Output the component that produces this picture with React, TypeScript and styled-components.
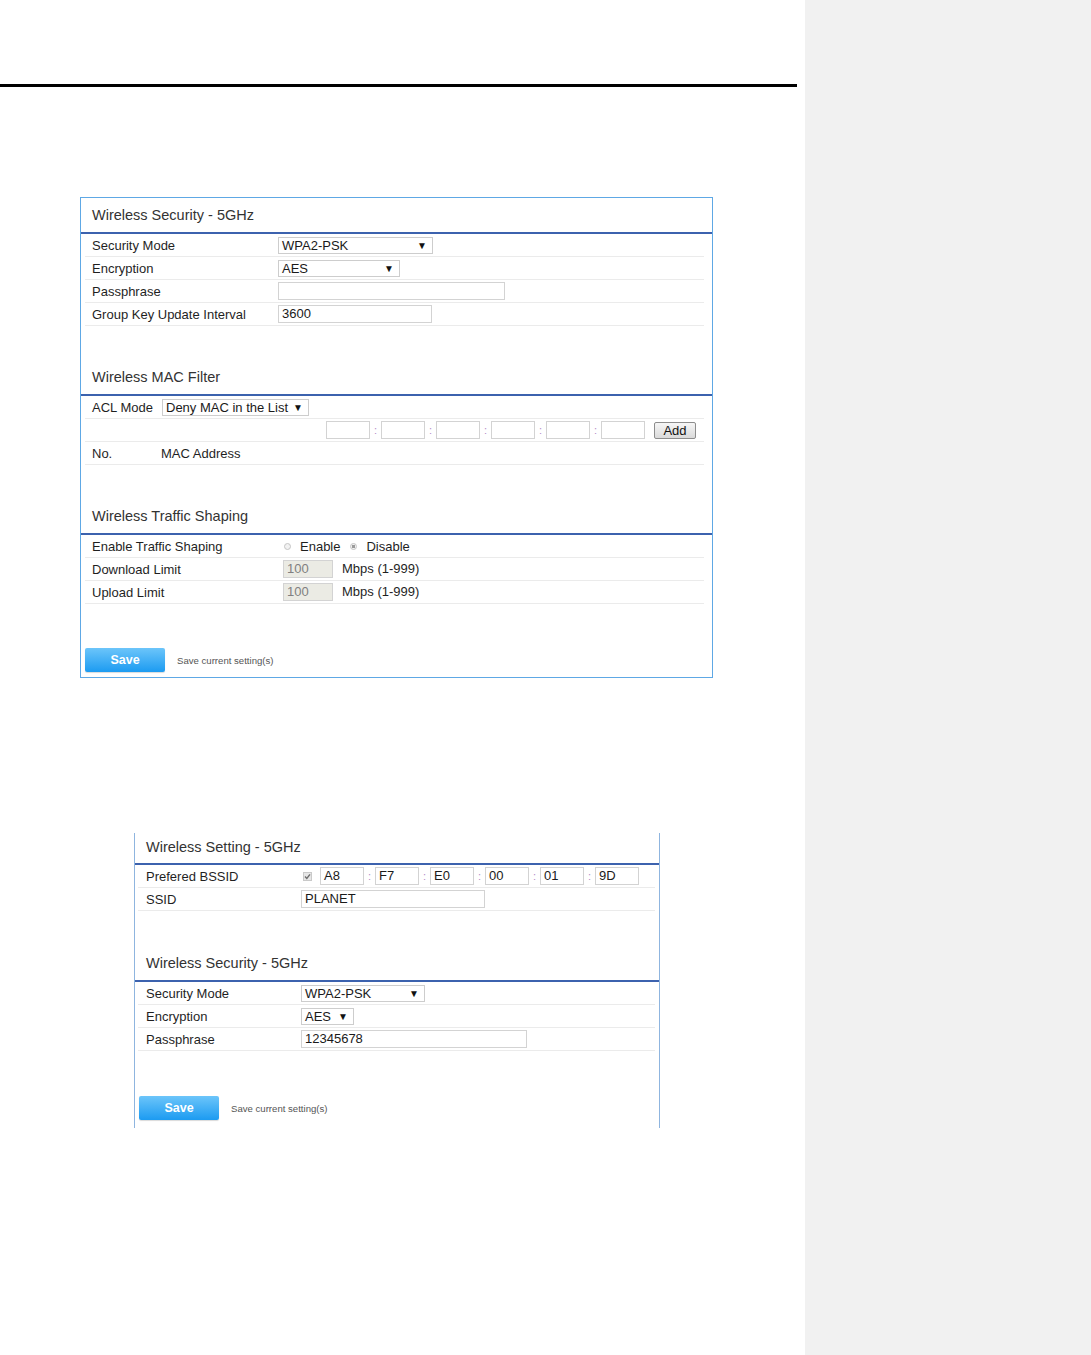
import React from "react";
import styled, { createGlobalStyle } from "styled-components";

const Global = createGlobalStyle`
  html, body { margin: 0; padding: 0; background: #fff; }
  body { font-family: "Liberation Sans", Arial, sans-serif; color: #222; }
  * { box-sizing: border-box; }
`;

const Page = styled.div`
  display: flex;
  min-height: 1355px;
`;

const Main = styled.div`
  width: 805px;
  flex-shrink: 0;
  background: #fff;
  padding-top: 84px;
`;

const Side = styled.div`
  flex: 1;
  background: #f1f1f1;
`;

const Rule = styled.div`
  width: 797px;
  height: 3px;
  background: #000;
`;

const Panel = styled.div<{ $top: number; $left: number; $width: number; $height: number; $open?: boolean }>`
  margin-top: ${(p) => p.$top}px;
  margin-left: ${(p) => p.$left}px;
  width: ${(p) => p.$width}px;
  height: ${(p) => p.$height}px;
  border: 1px solid ${(p) => (p.$open ? "#8fb5df" : "#5ea8e5")};
  ${(p) => (p.$open ? "border-top: none; border-bottom: none;" : "")}
  display: flex;
  flex-direction: column;
`;

const SectionTitle = styled.div<{ $pt: number; $pb: number; $pl: number; $mt?: number }>`
  margin-top: ${(p) => p.$mt ?? 0}px;
  padding: ${(p) => p.$pt}px 0 ${(p) => p.$pb}px ${(p) => p.$pl}px;
  font-size: 14.5px;
  line-height: 18px;
  color: #333;
  border-bottom: 2px solid #3c62ae;
`;

const Rows = styled.div<{ $ml: number; $mr: number }>`
  margin: 0 ${(p) => p.$mr}px 0 ${(p) => p.$ml}px;
  display: flex;
  flex-direction: column;
`;

const Row = styled.div<{ $pl?: number }>`
  display: flex;
  align-items: center;
  height: 23px;
  border-bottom: 1px solid #ebebeb;
  padding-left: ${(p) => p.$pl ?? 0}px;
  font-size: 13px;
  color: #1f1f1f;
`;

const Label = styled.div<{ $w: number; $pl: number }>`
  width: ${(p) => p.$w}px;
  padding-left: ${(p) => p.$pl}px;
  flex-shrink: 0;
  font-size: 13px;
  color: #1f1f1f;
  white-space: nowrap;
`;

const TextBox = styled.div<{ $w: number; $h?: number; $disabled?: boolean; $ml?: number }>`
  width: ${(p) => p.$w}px;
  height: ${(p) => p.$h ?? 18}px;
  margin-left: ${(p) => p.$ml ?? 0}px;
  border: 1px solid #d3d3d3;
  background: ${(p) => (p.$disabled ? "#ebebe4" : "#fff")};
  color: ${(p) => (p.$disabled ? "#808080" : "#1a1a1a")};
  font-size: 13px;
  line-height: 16px;
  padding-left: 3px;
  flex-shrink: 0;
  white-space: nowrap;
`;

const SelectBox = styled.div<{ $w: number; $ml?: number }>`
  width: ${(p) => p.$w}px;
  height: 17px;
  margin-left: ${(p) => p.$ml ?? 0}px;
  border: 1px solid #cdcdcd;
  background: #fff;
  display: flex;
  align-items: center;
  justify-content: space-between;
  padding: 0 5px 0 3px;
  font-size: 13px;
  color: #1a1a1a;
  flex-shrink: 0;
  white-space: nowrap;
`;

const Arrow = styled.span`
  font-size: 10px;
  color: #111;
`;

const Colon = styled.span`
  width: 11px;
  text-align: center;
  color: #b48dc7;
  font-size: 11px;
  flex-shrink: 0;
`;

const AddButton = styled.div`
  margin-left: 9px;
  width: 42px;
  height: 17px;
  border: 1px solid #8d8d8d;
  border-radius: 2px;
  background: linear-gradient(#f6f6f6, #dadada);
  font-size: 13px;
  line-height: 15px;
  text-align: center;
  color: #111;
`;

const Radio = styled.span<{ $checked?: boolean; $ml: number }>`
  width: 7px;
  height: 7px;
  border-radius: 50%;
  border: 1px solid #c4c4c4;
  background: ${(p) => (p.$checked ? "radial-gradient(circle, #9a9a9a 0 1.5px, #f2f2f2 2px)" : "#f2f2f2")};
  margin: 0 9px 0 ${(p) => p.$ml}px;
  flex-shrink: 0;
`;

const Unit = styled.span`
  margin-left: 9px;
  font-size: 13px;
  color: #1f1f1f;
  position: relative;
  top: -1px;
`;

const CheckBox = styled.span`
  width: 9px;
  height: 9px;
  margin: 0 8px 0 2px;
  border: 1px solid #c9c9c9;
  background: #e6e6e6;
  display: flex;
  align-items: center;
  justify-content: center;
  flex-shrink: 0;
`;

const Spacer = styled.div<{ $h: number }>`
  height: ${(p) => p.$h}px;
  flex-shrink: 0;
`;

const SaveBar = styled.div<{ $ml: number }>`
  display: flex;
  align-items: center;
  margin-left: ${(p) => p.$ml}px;
`;

const SaveButton = styled.div`
  width: 80px;
  height: 24px;
  border-radius: 2px;
  background: linear-gradient(#6cc5fa, #1c9bf1);
  box-shadow: 0 1px 1px rgba(0, 0, 0, 0.15);
  color: #fff;
  font-weight: bold;
  font-size: 12.5px;
  line-height: 24px;
  text-align: center;
`;

const SaveNote = styled.span`
  margin-left: 12px;
  font-size: 9.6px;
  color: #555;
`;

const MacInputs = ({ values, w, h }: { values: string[]; w: number; h?: number }) => (
  <>
    {values.map((v, i) => (
      <React.Fragment key={i}>
        {i > 0 && <Colon>:</Colon>}
        <TextBox $w={w} $h={h}>{v}</TextBox>
      </React.Fragment>
    ))}
  </>
);

export default function App() {
  return (
    <>
      <Global />
      <Page>
        <Main>
          <Rule />
          <Panel $top={110} $left={80} $width={633} $height={481}>
            <SectionTitle $pt={8} $pb={8} $pl={11}>Wireless Security - 5GHz</SectionTitle>
            <Rows $ml={4} $mr={8}>
              <Row>
                <Label $w={193} $pl={7}>Security Mode</Label>
                <SelectBox $w={155}>WPA2-PSK<Arrow>▼</Arrow></SelectBox>
              </Row>
              <Row>
                <Label $w={193} $pl={7}>Encryption</Label>
                <SelectBox $w={122}>AES<Arrow>▼</Arrow></SelectBox>
              </Row>
              <Row>
                <Label $w={193} $pl={7}>Passphrase</Label>
                <TextBox $w={227}></TextBox>
              </Row>
              <Row>
                <Label $w={193} $pl={7}>Group Key Update Interval</Label>
                <TextBox $w={154}>3600</TextBox>
              </Row>
            </Rows>

            <SectionTitle $pt={8} $pb={8} $pl={11} $mt={34}>Wireless MAC Filter</SectionTitle>
            <Rows $ml={4} $mr={8}>
              <Row>
                <Label $w={77} $pl={7}>ACL Mode</Label>
                <SelectBox $w={147}>Deny MAC in the List<Arrow>▼</Arrow></SelectBox>
              </Row>
              <Row $pl={241}>
                <MacInputs values={["", "", "", "", "", ""]} w={44} />
                <AddButton>Add</AddButton>
              </Row>
              <Row>
                <Label $w={76} $pl={7}>No.</Label>
                <span>MAC Address</span>
              </Row>
            </Rows>

            <SectionTitle $pt={8} $pb={8} $pl={11} $mt={34}>Wireless Traffic Shaping</SectionTitle>
            <Rows $ml={4} $mr={8}>
              <Row>
                <Label $w={193} $pl={7}>Enable Traffic Shaping</Label>
                <Radio $ml={6} />
                <span>Enable</span>
                <Radio $ml={10} $checked />
                <span>Disable</span>
              </Row>
              <Row>
                <Label $w={193} $pl={7}>Download Limit</Label>
                <TextBox $w={50} $ml={5} $disabled>100</TextBox>
                <Unit>Mbps (1-999)</Unit>
              </Row>
              <Row>
                <Label $w={193} $pl={7}>Upload Limit</Label>
                <TextBox $w={50} $ml={5} $disabled>100</TextBox>
                <Unit>Mbps (1-999)</Unit>
              </Row>
            </Rows>
            <Spacer $h={44} />
            <SaveBar $ml={4}>
              <SaveButton>Save</SaveButton>
              <SaveNote>Save current setting(s)</SaveNote>
            </SaveBar>
          </Panel>

          <Panel $top={155} $left={134} $width={526} $height={295} $open>
            <SectionTitle $pt={5} $pb={7} $pl={11}>Wireless Setting - 5GHz</SectionTitle>
            <Rows $ml={3} $mr={4}>
              <Row>
                <Label $w={163} $pl={8}>Prefered BSSID</Label>
                <CheckBox>
                  <svg width="7" height="7" viewBox="0 0 7 7">
                    <path d="M1 3.6 L2.8 5.4 L6 1.4" fill="none" stroke="#6d6d6d" strokeWidth="1.4" />
                  </svg>
                </CheckBox>
                <MacInputs values={["A8", "F7", "E0", "00", "01", "9D"]} w={44} />
              </Row>
              <Row>
                <Label $w={163} $pl={8}>SSID</Label>
                <TextBox $w={184}>PLANET</TextBox>
              </Row>
            </Rows>

            <SectionTitle $pt={5} $pb={8} $pl={11} $mt={38}>Wireless Security - 5GHz</SectionTitle>
            <Rows $ml={3} $mr={4}>
              <Row>
                <Label $w={163} $pl={8}>Security Mode</Label>
                <SelectBox $w={124}>WPA2-PSK<Arrow>▼</Arrow></SelectBox>
              </Row>
              <Row>
                <Label $w={163} $pl={8}>Encryption</Label>
                <SelectBox $w={53}>AES<Arrow>▼</Arrow></SelectBox>
              </Row>
              <Row>
                <Label $w={163} $pl={8}>Passphrase</Label>
                <TextBox $w={226}>12345678</TextBox>
              </Row>
            </Rows>
            <Spacer $h={45} />
            <SaveBar $ml={4}>
              <SaveButton>Save</SaveButton>
              <SaveNote>Save current setting(s)</SaveNote>
            </SaveBar>
          </Panel>
        </Main>
        <Side />
      </Page>
    </>
  );
}
